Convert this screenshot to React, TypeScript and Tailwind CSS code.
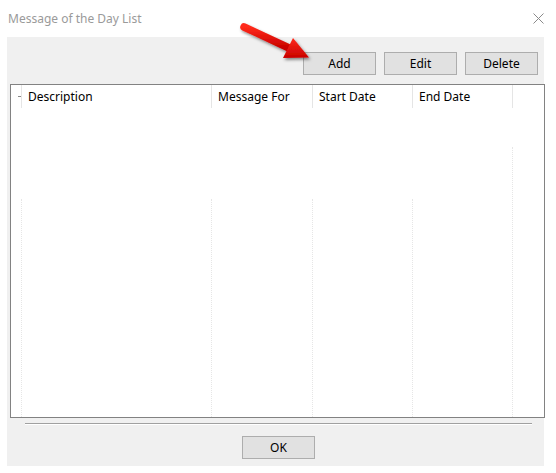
const columns = [
  { label: "", width: "w-[11px]", grid: "h-[218px]" },
  { label: "Description", width: "w-[190px]", grid: "h-[218px]" },
  { label: "Message For", width: "w-[101px]", grid: "h-[218px]" },
  { label: "Start Date", width: "w-[100px]", grid: "h-[218px]" },
  { label: "End Date", width: "w-[100px]", grid: "h-[270px]" },
];

function Button({ label, className = "" }: { label: string; className?: string }) {
  return (
    <button
      className={`h-[23px] w-[73px] border border-[#adadad] bg-[#e1e1e1] text-[12px] text-black ${className}`}
    >
      {label}
    </button>
  );
}

function Arrow() {
  return (
    <svg className="pointer-events-none absolute left-0 top-0" width="556" height="120">
      <defs>
        <filter id="shadow" x="-20%" y="-20%" width="140%" height="160%">
          <feDropShadow dx="1.5" dy="2" stdDeviation="1.5" floodColor="#000" floodOpacity="0.45" />
        </filter>
        <linearGradient id="red" x1="0" y1="0" x2="0" y2="1">
          <stop offset="0" stopColor="#ff2a1a" />
          <stop offset="1" stopColor="#c80000" />
        </linearGradient>
      </defs>
      <g filter="url(#shadow)">
        <line x1="244" y1="27" x2="289" y2="48" stroke="url(#red)" strokeWidth="7.5" strokeLinecap="round" />
        <polygon points="283,58 293,38 309,57.5" fill="url(#red)" />
      </g>
    </svg>
  );
}

export default function App() {
  return (
    <div className="relative h-[473px] w-[556px] bg-white font-['Noto_Sans',sans-serif] text-[12px]">
      {/* title bar */}
      <div className="flex h-[37px] items-center justify-between pl-[8px] pr-[12px]">
        <span className="text-[12px] text-[#9a9a9a]">Message of the Day List</span>
        <svg width="11" height="11" viewBox="0 0 11 11" className="mb-[1px]">
          <path d="M0.5 0.5 L10.5 10.5 M10.5 0.5 L0.5 10.5" stroke="#8a8a8a" strokeWidth="1" />
        </svg>
      </div>

      {/* dialog body */}
      <div className="ml-[7px] flex h-[429px] w-[537px] flex-col bg-[#f0f0f0]">
        <div className="mt-[15px] flex justify-end gap-[8px] pr-[6px]">
          <Button label="Add" />
          <Button label="Edit" />
          <Button label="Delete" />
        </div>

        {/* list view */}
        <div className="ml-[3px] mt-[9px] flex h-[334px] w-[535px] flex-col border border-[#828282] bg-white">
          <div className="flex h-[23px] shrink-0">
            {columns.map((c, i) => (
              <div
                key={i}
                className={`${c.width} flex items-center border-r border-[#e5e5e5] pl-[6px] text-black`}
              >
                {i === 0 ? <span className="ml-[1px] h-px w-[3px] bg-[#888]" /> : c.label}
              </div>
            ))}
          </div>
          <div className="flex flex-1">
            {columns.map((c, i) => (
              <div key={i} className={`${c.width} flex flex-col justify-end`}>
                <div className={`${c.grid} border-r border-dotted border-[#e6e6e6]`} />
              </div>
            ))}
          </div>
        </div>

        <div className="ml-[18px] mt-[5px] h-[2px] w-[507px] border-t border-[#a0a0a0] border-b border-b-white" />

        <div className="mt-[11px] flex justify-center pl-[6px]">
          <Button label="OK" />
        </div>
      </div>

      <Arrow />
    </div>
  );
}
